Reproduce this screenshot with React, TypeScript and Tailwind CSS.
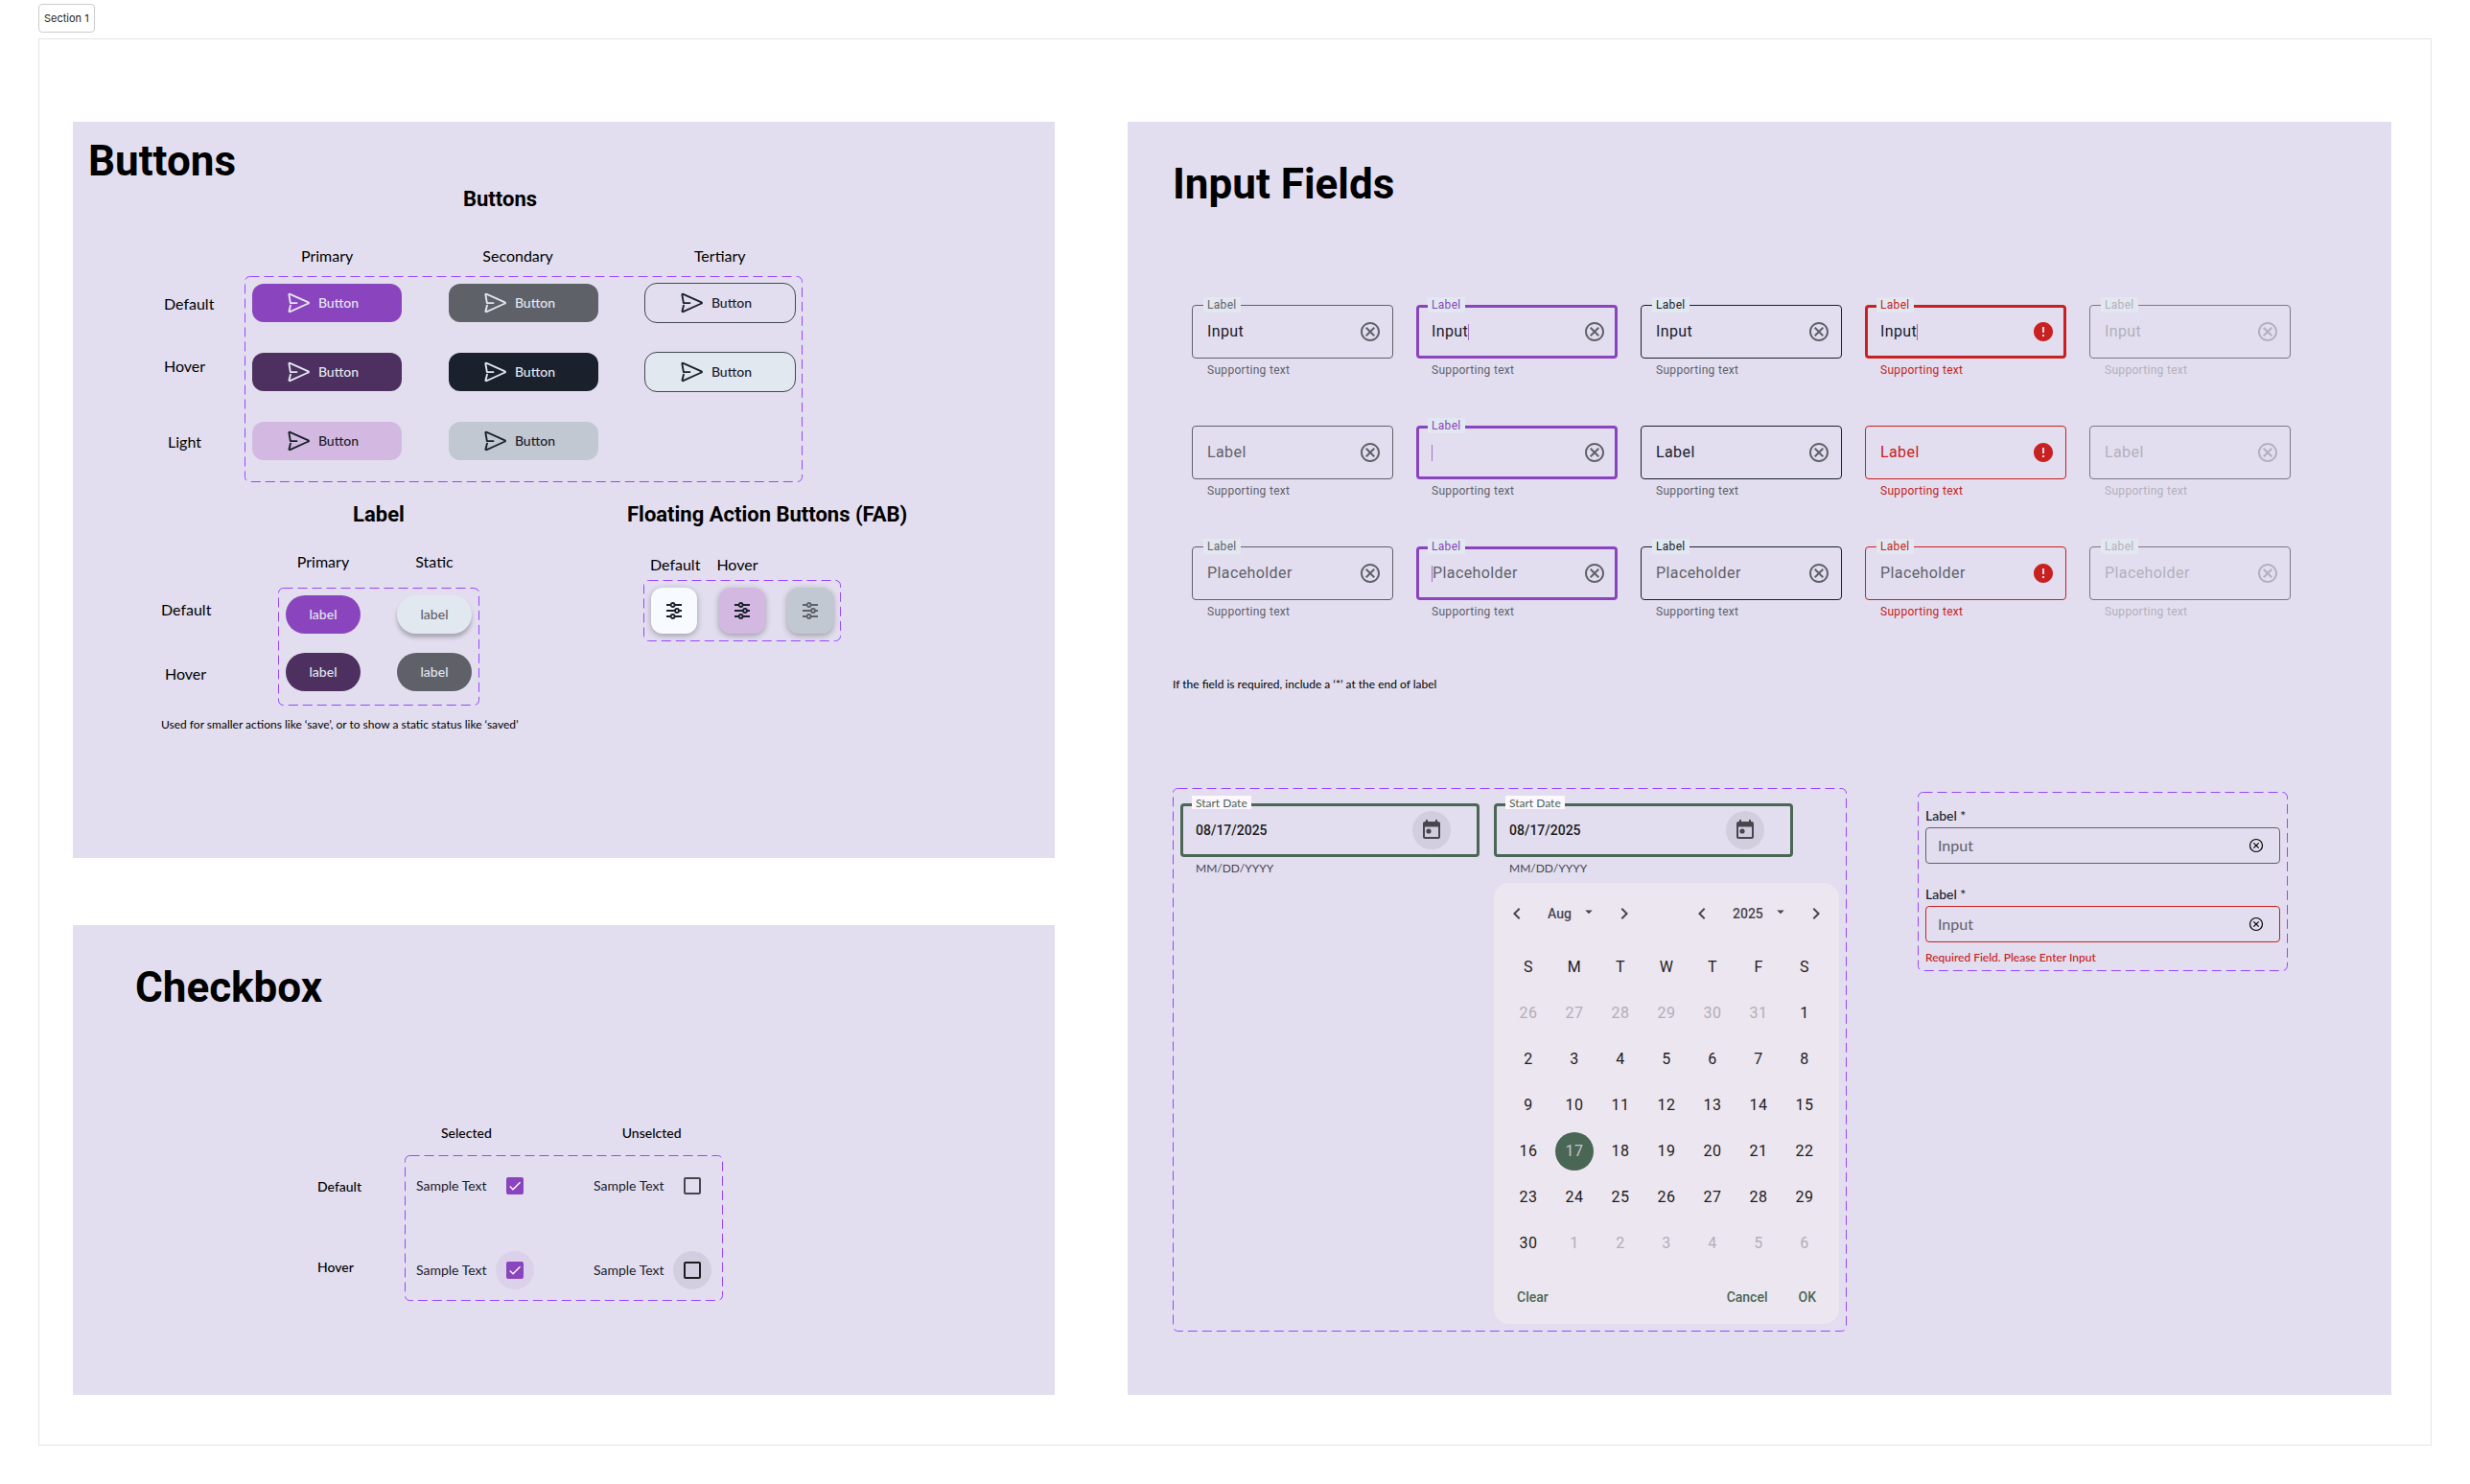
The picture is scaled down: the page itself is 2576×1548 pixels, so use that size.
import React, { useId } from "react";
import {
  MdArrowDropDown,
  MdCheck,
  MdChevronLeft,
  MdChevronRight,
  MdError,
  MdOutlineCancel,
} from "react-icons/md";

/* ---------- icons ---------- */

function SendIcon() {
  return (
    <svg viewBox="0 0 24 24" className="size-6 shrink-0" fill="none" stroke="currentColor" strokeWidth="1.9" strokeLinecap="round" strokeLinejoin="round" aria-hidden="true">
      <path d="M9.5 12.1H2.9L1.4 3.6C1.3 3 1.9 2.6 2.5 2.8L21.6 11.4C22.1 11.6 22.1 12.3 21.6 12.5L2.5 21.2C1.9 21.4 1.3 21 1.5 20.4L3 14.6" />
    </svg>
  );
}

function SlidersIcon() {
  return (
    <svg viewBox="0 0 24 24" className="size-6" fill="none" stroke="currentColor" strokeWidth="1.8" aria-hidden="true">
      <path d="M4 6H8.6M12.6 6H20M4 12H13M17 12H20M4 18H8.6M12.6 18H20" />
      <circle cx="10.6" cy="6" r="2" />
      <circle cx="15" cy="12" r="2" />
      <circle cx="10.6" cy="18" r="2" />
    </svg>
  );
}

function CalendarIcon() {
  return (
    <svg viewBox="0 0 24 24" className="size-6" fill="currentColor" aria-hidden="true">
      <path d="M19 3h-1V1h-2v2H8V1H6v2H5c-1.1 0-2 .9-2 2v14c0 1.1.9 2 2 2h14c1.1 0 2-.9 2-2V5c0-1.1-.9-2-2-2zm0 16H5V8.500h14V19z" />
      <circle cx="9" cy="13" r="2.6" />
    </svg>
  );
}

function SmallClearIcon() {
  return (
    <svg viewBox="0 0 16 16" className="size-4" fill="none" stroke="currentColor" strokeWidth="1.200" aria-hidden="true">
      <circle cx="8" cy="8" r="6.500" />
      <path d="M5.300 5.300L10.700 10.700M10.700 5.300L5.300 10.700" />
    </svg>
  );
}

/* ---------- shared pieces ---------- */

/** Box outlined with the violet dashes that mark a set of variants. */
function Variants({ className, children }: { className: string; children: React.ReactNode }) {
  return (
    <div className={`relative ${className}`}>
      <svg className="pointer-events-none absolute inset-0 size-full" aria-hidden="true">
        <rect x="0.5" y="0.5" rx="5" className="h-[calc(100%-1px)] w-[calc(100%-1px)]" fill="none" stroke="#9747ff" strokeDasharray="10 5" />
      </svg>
      {children}
    </div>
  );
}

function Title({ children }: { children: React.ReactNode }) {
  return <h1 className="font-[Roboto,sans-serif] text-[44px] leading-12 font-bold text-black">{children}</h1>;
}

const subtitle = "font-[Roboto,sans-serif] text-[22px] leading-8 font-bold whitespace-nowrap text-black";

/* ---------- buttons ---------- */

const actions = [
  "bg-[#8a44be] text-[#e2e8f0]",
  "bg-[#5f6169] text-[#e2e8f0]",
  "text-[#1a202c] outline outline-[#1a202c]/80",
  "bg-[#4d305f] text-[#e2e8f0]",
  "bg-[#1a202c] text-[#e2e8f0]",
  "bg-[#e2e8f0] text-[#1a202c] outline outline-[#1a202c]/80",
  "bg-[#d3b9e1] text-[#1a202c]",
  "bg-[#c2c8d2] text-[#1a202c]",
];

const pills = [
  "bg-[#8a44be] text-[#e2e8f0]",
  "bg-[#e2e8f0] text-[#5f6169] shadow-[0_4px_4px_rgba(0,0,0,0.25)]",
  "bg-[#4d305f] text-[#e2e8f0]",
  "bg-[#5f6169] text-[#e2e8f0]",
];

const fabs = ["bg-[#f7faff] text-[#1a202c]", "bg-[#d3b9e1] text-[#1a202c]", "bg-[#c2c8d2] text-[#5f6169]"];

function ButtonsPanel() {
  return (
    <section className="bg-[#e2deef] pt-[17px] pb-[131px]">
      <div className="pl-4">
        <Title>Buttons</Title>
      </div>
      <h2 className={`${subtitle} pl-[407px]`}>Buttons</h2>

      <div className="flex pt-[31px] pl-[95px] text-base leading-6 text-black">
        <div className="w-21 pt-[50px]">
          <p>Default</p>
          <p className="pt-[41px]">Hover</p>
          <p className="pt-[55px] pl-1">Light</p>
        </div>
        <div>
          <div className="flex pl-[59px]">
            <p>Primary</p>
            <p className="ml-[135px]">Secondary</p>
            <p className="ml-[147px]">Tertiary</p>
          </div>
          <Variants className="mt-[9px] grid grid-cols-[repeat(3,156px)] gap-x-[49px] gap-y-8 px-2 pt-2 pb-[23px]">
            {actions.map((look, i) => (
              <button key={i} type="button" className={`flex h-10 items-center justify-center gap-2 rounded-xl pr-2 text-sm font-medium ${look}`}>
                <SendIcon />
                Button
              </button>
            ))}
          </Variants>
        </div>
      </div>

      <div className="flex pt-[18px] pl-[92px] text-base leading-6 text-black">
        <div className="w-[486px]">
          <div className="flex">
            <div className="w-[122px] pt-[103px]">
              <p>Default</p>
              <p className="pt-[43px] pl-1">Hover</p>
            </div>
            <div>
              <h2 className={`${subtitle} text-center`}>Label</h2>
              <div className="grid grid-cols-[78px_78px] gap-x-[38px] px-2 pt-[21px] text-center">
                <p>Primary</p>
                <p>Static</p>
              </div>
              <Variants className="mt-[15px] grid grid-cols-[78px_78px] gap-x-[38px] gap-y-5 px-2 pt-2 pb-[15px]">
                {pills.map((look, i) => (
                  <button key={i} type="button" className={`h-10 rounded-full text-sm font-medium ${look}`}>
                    label
                  </button>
                ))}
              </Variants>
            </div>
          </div>
          <p className="pt-3 text-xs leading-4">Used for smaller actions like ‘save’, or to show a static status like ‘saved’</p>
        </div>

        <div>
          <h2 className={subtitle}>Floating Action Buttons (FAB)</h2>
          <div className="flex gap-[17px] pt-6 pl-6">
            <p>Default</p>
            <p>Hover</p>
          </div>
          <Variants className="mt-1 ml-[17px] flex w-fit gap-[23px] p-2">
            {fabs.map((look, i) => (
              <button key={i} type="button" aria-label="Filters" className={`grid size-12 place-items-center rounded-xl shadow-[0_2px_6px_rgba(0,0,0,0.3)] ${look}`}>
                <SlidersIcon />
              </button>
            ))}
          </Variants>
        </div>
      </div>
    </section>
  );
}

/* ---------- checkboxes ---------- */

function CheckRow({ checked, halo, box }: { checked: boolean; halo: string; box: string }) {
  return (
    <label className="flex h-12 w-[123px] items-center justify-between text-sm whitespace-nowrap text-[#1a202c]">
      Sample Text
      <span className={`relative grid size-10 place-items-center rounded-full ${halo}`}>
        <input type="checkbox" defaultChecked={checked} className={`peer size-[18px] appearance-none rounded-[2px] border-2 checked:border-[#8a44be] checked:bg-[#8a44be] ${box}`} />
        <MdCheck className="pointer-events-none absolute hidden size-4 text-white peer-checked:block" />
      </span>
    </label>
  );
}

function CheckboxPanel() {
  return (
    <section className="flex-1 bg-[#e2deef] pt-[41px]">
      <div className="pl-[65px]">
        <Title>Checkbox</Title>
      </div>
      <div className="flex pt-[118px] pl-[255px] text-sm leading-5 font-medium text-black">
        <div className="w-[91px] pt-14">
          <p>Default</p>
          <p className="pt-16">Hover</p>
        </div>
        <div>
          <div className="flex gap-[136px] pl-[38px]">
            <p>Selected</p>
            <p>Unselcted</p>
          </div>
          <Variants className="mt-[13px] grid w-[332px] grid-cols-[123px_123px] gap-x-[62px] gap-y-10 pt-2 pb-2 pl-3 font-normal">
            <CheckRow checked halo="" box="border-[#49454f]" />
            <CheckRow checked={false} halo="" box="border-[#49454f]" />
            <CheckRow checked halo="bg-[#8a44be]/8" box="border-[#49454f]" />
            <CheckRow checked={false} halo="bg-[#1d1b20]/8" box="border-[#1d1b20]" />
          </Variants>
        </div>
      </div>
    </section>
  );
}

/* ---------- text fields ---------- */

type State = "enabled" | "focused" | "hovered" | "error" | "disabled";
type Kind = "input" | "label" | "placeholder";

const states: State[] = ["enabled", "focused", "hovered", "error", "disabled"];
const kinds: Kind[] = ["input", "label", "placeholder"];

const tone: Record<State, { line: string; label: string; help: string }> = {
  enabled: { line: "border-[#5f6169]", label: "text-[#5f6169]", help: "text-[#5f6169]" },
  focused: { line: "border-[#8a44be]", label: "text-[#8a44be]", help: "text-[#5f6169]" },
  hovered: { line: "border-[#1a202c]", label: "text-[#1a202c]", help: "text-[#5f6169]" },
  error: { line: "border-[#c92020]", label: "text-[#c92020]", help: "text-[#c92020]" },
  disabled: { line: "border-[#7b7783]", label: "text-[#b3b0bd]", help: "text-[#b3b0bd]" },
};

function TextField({ kind, state }: { kind: Kind; state: State }) {
  const id = useId();
  const t = tone[state];
  const off = state === "disabled";
  const active = state === "focused" || (state === "error" && kind === "input");
  const floating = kind !== "label" || state === "focused";
  const textColor = off ? "text-[#b3b0bd] placeholder:text-[#b3b0bd]" : "text-[#1a202c] placeholder:text-[#5f6169]";
  const caret = <span className={`h-[17px] w-px shrink-0 ${state === "error" ? "bg-[#c92020]/70" : "bg-[#8a44be]/70"}`} />;

  return (
    <div className="font-[Roboto,sans-serif]">
      <div className="relative flex h-14 items-center justify-between">
        <div className={`pointer-events-none absolute inset-0 rounded-sm ${active ? "border-3" : "border"} ${t.line}`} />
        <label
          htmlFor={id}
          className={`absolute left-3 px-1 tracking-wide ${t.label} ${floating ? "-top-2 bg-[#e2e8f0] text-xs leading-4" : "top-4 text-base leading-6"}`}
        >
          Label
        </label>
        <div className="flex min-w-0 items-center pl-4">
          {active && kind !== "input" && caret}
          <input
            id={id}
            type="text"
            disabled={off}
            defaultValue={kind === "input" ? "Input" : ""}
            placeholder={kind === "placeholder" ? "Placeholder" : undefined}
            className={`field-sizing-content min-w-0 bg-transparent text-base leading-6 tracking-wide outline-none ${textColor}`}
          />
          {active && kind === "input" && caret}
        </div>
        <button type="button" disabled={off} aria-label={state === "error" ? "Error" : "Clear"} className={`grid size-12 shrink-0 place-items-center ${state === "error" ? "text-[#c92020]" : off ? "text-[#b3b0bd]" : "text-[#5f6169]"}`}>
          {state === "error" ? <MdError className="size-6" /> : <MdOutlineCancel className="size-6" />}
        </button>
      </div>
      <p className={`pt-1 pl-4 text-xs leading-4 tracking-wide ${t.help}`}>Supporting text</p>
    </div>
  );
}

function DateField() {
  const id = useId();
  return (
    <div className="w-[312px]">
      <div className="relative flex h-14 items-center justify-between rounded-sm border-3 border-[#4a6654] pr-[27px] pl-[13px]">
        <label htmlFor={id} className="absolute -top-[11px] left-[9px] bg-[#fef7ff] px-1 pt-0.5 text-xs leading-3 text-[#4a6654]">
          Start Date
        </label>
        <input id={id} type="text" defaultValue="08/17/2025" className="w-32 bg-transparent font-[Roboto,sans-serif] text-sm font-medium text-[#1d1b20] outline-none" />
        <button type="button" aria-label="Choose date" className="grid size-10 place-items-center rounded-full bg-[#49454f]/10 text-[#49454f]">
          <CalendarIcon />
        </button>
      </div>
      <p className="pt-1 pl-4 text-xs leading-4 text-[#49454f]">MM/DD/YYYY</p>
    </div>
  );
}

const weekdays = ["S", "M", "T", "W", "T", "F", "S"];
const weeks = [
  [26, 27, 28, 29, 30, 31, 1],
  [2, 3, 4, 5, 6, 7, 8],
  [9, 10, 11, 12, 13, 14, 15],
  [16, 17, 18, 19, 20, 21, 22],
  [23, 24, 25, 26, 27, 28, 29],
  [30, 1, 2, 3, 4, 5, 6],
];

function Stepper({ name, value, width }: { name: string; value: string; width: string }) {
  return (
    <div className="flex items-center">
      <button type="button" aria-label={`Previous ${name}`}>
        <MdChevronLeft className="size-6" />
      </button>
      <div className={`relative mr-4 ml-5 ${width}`}>
        <select aria-label={name} defaultValue={value} className="w-full appearance-none bg-transparent text-sm leading-5 font-medium outline-none">
          <option>{value}</option>
        </select>
        <MdArrowDropDown className="pointer-events-none absolute top-[1px] right-0 size-[18px]" />
      </div>
      <button type="button" aria-label={`Next ${name}`}>
        <MdChevronRight className="size-6" />
      </button>
    </div>
  );
}

function Calendar() {
  return (
    <div className="w-[360px] rounded-2xl bg-[#ece6f0] px-3 pb-2 font-[Roboto,sans-serif] text-[#1d1b20]">
      <div className="flex h-16 items-center justify-between text-[#49454f]">
        <Stepper name="month" value="Aug" width="w-[52px]" />
        <Stepper name="year" value="2025" width="w-[59px]" />
      </div>
      <table className="w-full table-fixed text-center text-base tracking-wide">
        <thead>
          <tr className="h-12">
            {weekdays.map((d, i) => (
              <th key={i} scope="col" className="p-0 font-normal">
                {d}
              </th>
            ))}
          </tr>
        </thead>
        <tbody>
          {weeks.map((week, w) => (
            <tr key={w} className="h-12">
              {week.map((day, d) => {
                const outside = (w === 0 && day > 7) || (w === 5 && day < 7);
                const chosen = day === 17;
                return (
                  <td key={d} className="p-0">
                    <button type="button" className={`size-10 rounded-full align-middle ${chosen ? "bg-[#4a6654] text-[#cac4d0]" : outside ? "text-[#b3aeb8]" : ""}`}>
                      {day}
                    </button>
                  </td>
                );
              })}
            </tr>
          ))}
        </tbody>
      </table>
      <div className="flex gap-2 pt-3 text-sm font-medium text-[#4a6654]">
        <button type="button" className="mr-auto h-10 px-3">Clear</button>
        <button type="button" className="h-10 px-3">Cancel</button>
        <button type="button" className="h-10 px-3">OK</button>
      </div>
    </div>
  );
}

function FormField({ line, error }: { line: string; error?: string }) {
  const id = useId();
  return (
    <div>
      <label htmlFor={id} className="block text-sm leading-5 font-medium text-[#1a202c]">
        Label *
      </label>
      <div className={`mt-0.5 flex h-[38px] items-center justify-between rounded-sm border pr-4 pl-3 ${line}`}>
        <input id={id} type="text" placeholder="Input" className="min-w-0 flex-1 bg-transparent text-base text-[#1a202c] outline-none placeholder:text-[#5f6169]" />
        <button type="button" aria-label="Clear" className="text-black">
          <SmallClearIcon />
        </button>
      </div>
      {error && <p className="pt-2 text-xs leading-4 font-medium text-[#c92020]">{error}</p>}
    </div>
  );
}

function InputsPanel() {
  return (
    <section className="bg-[#e2deef] pt-[41px] pb-[66px] pl-[47px]">
      <Title>Input Fields</Title>
      <div className="mt-[102px] mr-[105px] ml-5 grid grid-cols-5 gap-x-6 gap-y-[50px]">
        {kinds.map((kind) => states.map((state) => <TextField key={`${kind}-${state}`} kind={kind} state={state} />))}
      </div>
      <p className="pt-[58px] text-xs leading-5 text-black">If the field is required, include a ‘*’ at the end of label</p>
      <div className="mt-[98px] flex items-start">
        <Variants className="flex gap-[15px] px-2 pt-4 pb-2">
          <DateField />
          <div className="flex flex-col gap-[7px]">
            <DateField />
            <Calendar />
          </div>
        </Variants>
        <Variants className="mt-1 mr-[108px] ml-[74px] flex flex-1 flex-col gap-[22px] px-2 pt-[15px] pb-1.5">
          <FormField line="border-[#5f6169]" />
          <FormField line="border-[#c92020]" error="Required Field. Please Enter Input" />
        </Variants>
      </div>
    </section>
  );
}

export default function App() {
  return (
    <main className="bg-white px-10 pt-1 pb-10 font-[Lato,sans-serif]">
      <p className="flex h-[30px] w-fit items-center rounded-sm border border-[#cccccc] px-[5px] font-[Inter,sans-serif] text-[11px] text-[#1e1e1e]">Section 1</p>
      <div className="mt-1.5 grid grid-cols-[1024fr_1318fr] gap-x-[76px] border border-[#e5e5e5] pt-[86px] pr-[41px] pb-[52px] pl-[35px]">
        <div className="flex flex-col gap-[70px]">
          <ButtonsPanel />
          <CheckboxPanel />
        </div>
        <InputsPanel />
      </div>
    </main>
  );
}
